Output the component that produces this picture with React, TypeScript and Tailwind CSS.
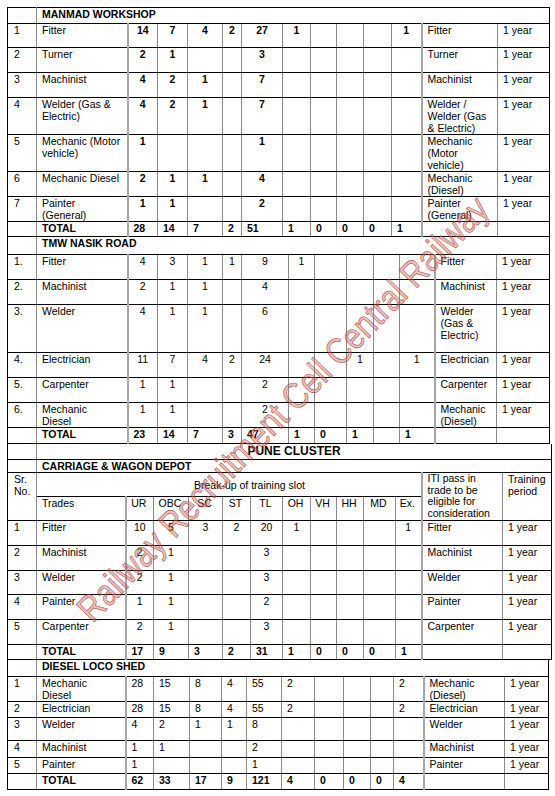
import React from "react";

type Align = "c" | "l";

interface Row {
  h: string;
  cells: string[];
  total?: boolean;
}

interface Section {
  width: string;
  cols: string[];
  title: string;
  titleH: string;
  align: Align;
  bold: boolean;
  rows: Row[];
}

const rb = (i: number) => {
  if (i === 13) return "border-r border-r-black";
  if (i === 1 || i === 11) return "border-r-2 border-r-[#a6a6a6]";
  return "border-r border-r-[#8a8a8a]";
};

const base = "p-0 align-top leading-[12px] border-b border-b-black whitespace-pre-line";

const cellCls = (i: number, align: Align, bold: boolean, total?: boolean) => {
  let pad = "pl-[5px]";
  if (i === 0) pad = "pl-[6px] border-l border-l-black";
  else if (i >= 2 && i <= 11 && align === "c") pad = "text-center";
  const strong = (bold && i >= 2 && i <= 11) || (total && i >= 1 && i <= 11);
  return [base, rb(i), pad, strong ? "font-bold" : ""].join(" ");
};

const manmad: Section = {
  width: "w-[542px]",
  cols: ["w-[29px]", "w-[91px]", "w-[30px]", "w-[30px]", "w-[35px]", "w-[19px]", "w-[41px]", "w-[28px]", "w-[26px]", "w-[27px]", "w-[28px]", "w-[30px]", "w-[76px]", "w-[52px]"],
  title: "MANMAD WORKSHOP",
  titleH: "h-[16px]",
  align: "c",
  bold: true,
  rows: [
    { h: "h-[24px]", cells: ["1", "Fitter", "14", "7", "4", "2", "27", "1", "", "", "", "1", "Fitter", "1 year"] },
    { h: "h-[25px]", cells: ["2", "Turner", "2", "1", "", "", "3", "", "", "", "", "", "Turner", "1 year"] },
    { h: "h-[25px]", cells: ["3", "Machinist", "4", "2", "1", "", "7", "", "", "", "", "", "Machinist", "1 year"] },
    { h: "h-[36px]", cells: ["4", "Welder (Gas &\nElectric)", "4", "2", "1", "", "7", "", "", "", "", "", "Welder /\nWelder (Gas\n& Electric)", "1 year"] },
    { h: "h-[37px]", cells: ["5", "Mechanic (Motor\nvehicle)", "1", "", "", "", "1", "", "", "", "", "", "Mechanic\n(Motor\nvehicle)", "1 year"] },
    { h: "h-[25px]", cells: ["6", "Mechanic Diesel", "2", "1", "1", "", "4", "", "", "", "", "", "Mechanic\n(Diesel)", "1 year"] },
    { h: "h-[25px]", cells: ["7", "Painter\n(General)", "1", "1", "", "", "2", "", "", "", "", "", "Painter\n(General)", "1 year"] },
    { h: "h-[15px]", total: true, cells: ["", "TOTAL", "28", "14", "7", "2", "51", "1", "0", "0", "0", "1", "", ""] },
  ],
};

const nasik: Section = {
  width: "w-[542px]",
  cols: ["w-[29px]", "w-[91px]", "w-[30px]", "w-[30px]", "w-[35px]", "w-[19px]", "w-[47px]", "w-[26px]", "w-[32px]", "w-[27px]", "w-[26px]", "w-[35px]", "w-[62px]", "w-[53px]"],
  title: "TMW NASIK ROAD",
  titleH: "h-[17px]",
  align: "c",
  bold: false,
  rows: [
    { h: "h-[25px]", cells: ["1.", "Fitter", "4", "3", "1", "1", "9", "1", "", "", "", "", "Fitter", "1 year"] },
    { h: "h-[25px]", cells: ["2.", "Machinist", "2", "1", "1", "", "4", "", "", "", "", "", "Machinist", "1 year"] },
    { h: "h-[48px]", cells: ["3.", "Welder", "4", "1", "1", "", "6", "", "", "", "", "", "Welder\n(Gas &\nElectric)", "1 year"] },
    { h: "h-[25px]", cells: ["4.", "Electrician", "11", "7", "4", "2", "24", "", "", "1", "", "1", "Electrician", "1 year"] },
    { h: "h-[25px]", cells: ["5.", "Carpenter", "1", "1", "", "", "2", "", "", "", "", "", "Carpenter", "1 year"] },
    { h: "h-[25px]", cells: ["6.", "Mechanic\nDiesel", "1", "1", "", "", "2", "", "", "", "", "", "Mechanic\n(Diesel)", "1 year"] },
    { h: "h-[16px]", total: true, cells: ["", "TOTAL", "23", "14", "7", "3", "47", "1", "0", "1", "", "1", "", ""] },
  ],
};

const cwCols = ["w-[29px]", "w-[89px]", "w-[28px]", "w-[35px]", "w-[34px]", "w-[28px]", "w-[32px]", "w-[28px]", "w-[26px]", "w-[27px]", "w-[32px]", "w-[26px]", "w-[81px]", "w-[49px]"];

const cwRows: Row[] = [
  { h: "h-[25px]", cells: ["1", "Fitter", "10", "5", "3", "2", "20", "1", "", "", "", "1", "Fitter", "1 year"] },
  { h: "h-[25px]", cells: ["2", "Machinist", "2", "1", "", "", "3", "", "", "", "", "", "Machinist", "1 year"] },
  { h: "h-[24px]", cells: ["3", "Welder", "2", "1", "", "", "3", "", "", "", "", "", "Welder", "1 year"] },
  { h: "h-[25px]", cells: ["4", "Painter", "1", "1", "", "", "2", "", "", "", "", "", "Painter", "1 year"] },
  { h: "h-[25px]", cells: ["5", "Carpenter", "2", "1", "", "", "3", "", "", "", "", "", "Carpenter", "1 year"] },
  { h: "h-[15px]", total: true, cells: ["", "TOTAL", "17", "9", "3", "2", "31", "1", "0", "0", "0", "1", "", ""] },
];

const diesel: Section = {
  width: "w-[541px]",
  cols: ["w-[29px]", "w-[89px]", "w-[28px]", "w-[36px]", "w-[32px]", "w-[25px]", "w-[35px]", "w-[33px]", "w-[29px]", "w-[27px]", "w-[23px]", "w-[30px]", "w-[81px]", "w-[44px]"],
  title: "DIESEL LOCO SHED",
  titleH: "h-[17px]",
  align: "l",
  bold: false,
  rows: [
    { h: "h-[25px]", cells: ["1", "Mechanic\nDiesel", "28", "15", "8", "4", "55", "2", "", "", "", "2", "Mechanic\n(Diesel)", "1 year"] },
    { h: "h-[16px]", cells: ["2", "Electrician", "28", "15", "8", "4", "55", "2", "", "", "", "2", "Electrician", "1 year"] },
    { h: "h-[23px]", cells: ["3", "Welder", "4", "2", "1", "1", "8", "", "", "", "", "", "Welder", "1 year"] },
    { h: "h-[17px]", cells: ["4", "Machinist", "1", "1", "", "", "2", "", "", "", "", "", "Machinist", "1 year"] },
    { h: "h-[16px]", cells: ["5", "Painter", "1", "", "", "", "1", "", "", "", "", "", "Painter", "1 year"] },
    { h: "h-[16px]", total: true, cells: ["", "TOTAL", "62", "33", "17", "9", "121", "4", "0", "0", "0", "4", "", ""] },
  ],
};

const BodyRows = ({ rows, align, bold }: { rows: Row[]; align: Align; bold: boolean }) => (
  <>
    {rows.map((r, ri) => (
      <tr key={ri} className={r.h}>
        {r.cells.map((c, i) => (
          <td key={i} className={cellCls(i, r.total ? "l" : align, bold, r.total)}>
            {c}
          </td>
        ))}
      </tr>
    ))}
  </>
);

const TitleRow = ({ h, title, first }: { h: string; title: string; first?: boolean }) => (
  <tr className={h}>
    <td className={cellCls(0, "l", false) + (first ? " border-t border-t-black" : "")}></td>
    <td colSpan={13} className={base + " " + rb(13) + " pl-[5px] font-bold" + (first ? " border-t border-t-black" : "")}>
      {title}
    </td>
  </tr>
);

const Block = ({ s, first }: { s: Section; first?: boolean }) => (
  <table className={"table-fixed border-collapse " + s.width}>
    <colgroup>
      {s.cols.map((w, i) => (
        <col key={i} className={w} />
      ))}
    </colgroup>
    <tbody>
      <TitleRow h={s.titleH} title={s.title} first={first} />
      <BodyRows rows={s.rows} align={s.align} bold={s.bold} />
    </tbody>
  </table>
);

const headLabels = ["UR", "OBC", "SC", "ST", "TL", "OH", "VH", "HH", "MD", "Ex."];

const PuneBlock = () => (
  <table className="table-fixed border-collapse w-[544px]">
    <colgroup>
      {cwCols.map((w, i) => (
        <col key={i} className={w} />
      ))}
    </colgroup>
    <tbody>
      <tr className="h-[16px]">
        <td className={cellCls(0, "l", false)}></td>
        <td colSpan={13} className={base + " " + rb(13) + " text-center align-middle! text-[12px] leading-[14px] font-bold"}>
          PUNE CLUSTER
        </td>
      </tr>
      <TitleRow h="h-[13px]" title="CARRIAGE & WAGON DEPOT" />
      <tr className="h-[24px]">
        <td rowSpan={2} className={cellCls(0, "l", false)}>
          {"Sr.\nNo."}
        </td>
        <td colSpan={11} className={base + " " + rb(11) + " align-middle! pl-[157px]"}>
          Break-up of training slot
        </td>
        <td rowSpan={2} className={base + " " + rb(12) + " pl-[5px] leading-[11.7px]!"}>
          {"ITI pass in\ntrade to be\neligible for\nconsideration"}
        </td>
        <td rowSpan={2} className={base + " " + rb(13) + " pl-[5px]"}>
          {"Training\nperiod"}
        </td>
      </tr>
      <tr className="h-[23px]">
        <td className={base + " " + rb(1) + " pl-[5px]"}>Trades</td>
        {headLabels.map((l, i) => (
          <td key={l} className={base + " " + rb(i + 2) + " text-center pr-[2px]"}>
            {l}
          </td>
        ))}
      </tr>
      <BodyRows rows={cwRows} align="c" bold={false} />
    </tbody>
  </table>
);

export default function App() {
  return (
    <div className="relative w-[555px] h-[796px] overflow-hidden bg-white pl-[7px] pt-[7px] text-black text-[10.5px] font-['Liberation_Sans',Arial,sans-serif]">
      <Block s={manmad} first />
      <Block s={nasik} />
      <PuneBlock />
      <Block s={diesel} />
      {/* watermark stamped across the page */}
      <div className="pointer-events-none absolute left-[283px] top-[409px] -translate-x-1/2 -translate-y-1/2 -rotate-[46deg] scale-x-[0.84] whitespace-nowrap text-[37px] leading-none text-[rgba(205,115,110,0.45)] [-webkit-text-stroke:0.7px_rgba(165,50,45,0.8)]">
        Railway Recruitment Cell Central Railway
      </div>
    </div>
  );
}
